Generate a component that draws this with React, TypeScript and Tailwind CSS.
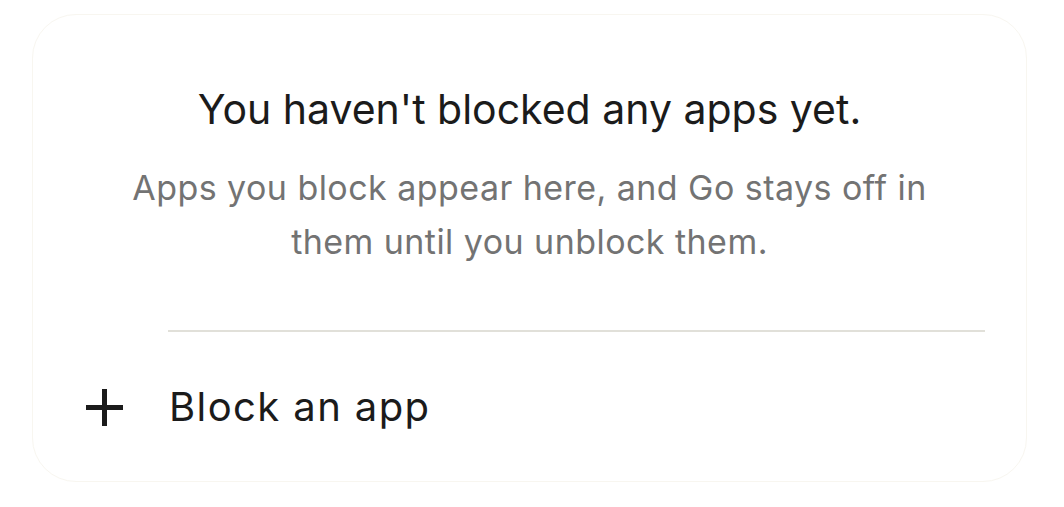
import type { FC } from 'react';

const PlusIcon: FC = () => (
  <svg width="37" height="37" viewBox="0 0 37 37" fill="none" aria-hidden>
    <path d="M18.5 0v37M0 18.5h37" stroke="#1b1b1b" strokeWidth="5" />
  </svg>
);

export default function App() {
  return (
    <div className="min-h-screen w-full bg-white pl-[32px] pr-[37px] pt-[14px] font-['Inter',sans-serif]">
      <div className="flex h-[468px] flex-col rounded-[44px] border border-[#f8f6f0] bg-white">
        <div className="flex flex-col items-center pt-[70px] text-center">
          <h2 className="text-[41px] leading-[48px] text-[#1b1b1b]">
            You haven't blocked any apps yet.
          </h2>
          <p className="mt-[28px] max-w-[810px] text-[34px] leading-[54px] tracking-[0.45px] text-[#737373]">
            Apps you block appear here, and Go stays off in them until you unblock them.
          </p>
        </div>
        <div className="mt-[61px] ml-[135px] mr-[41px] h-[2px] bg-[#e1e0d9]" />
        <button className="flex items-center gap-[46px] pl-[53px] pt-[53px] text-left">
          <PlusIcon />
          <span className="text-[40px] leading-[44px] tracking-[1.4px] text-[#1b1b1b]">
            Block an app
          </span>
        </button>
      </div>
    </div>
  );
}
